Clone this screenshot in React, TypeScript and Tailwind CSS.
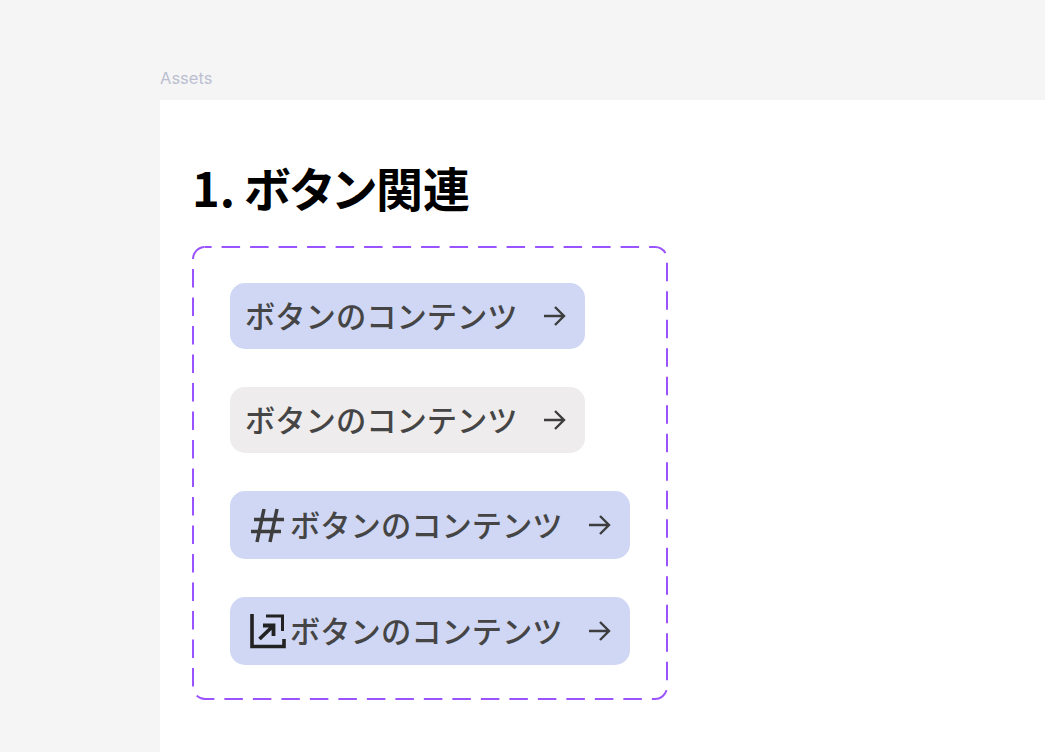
const jp = "font-['Noto_Sans_CJK_JP','Noto_Sans',sans-serif]";

function Arrow() {
  return (
    <svg width="30" height="30" viewBox="0 0 30 30" fill="none" stroke="#3d3d3d" strokeWidth="2.4" className="shrink-0">
      <path d="M5 15H25M16 6L25 15L16 24" />
    </svg>
  );
}

function Hash() {
  return (
    <svg width="38" height="38" viewBox="0 0 38 38" fill="none" stroke="#3d3d3d" strokeWidth="3.5" className="shrink-0">
      <path d="M16 3L9 36M29 3L22 36M6 13.5H36M3 25.5H33" />
    </svg>
  );
}

function ShareBox() {
  return (
    <svg width="38" height="38" viewBox="0 0 38 38" fill="none" stroke="#222222" className="shrink-0">
      <path d="M4 2V34.5H36V27" strokeWidth="3.6" />
      <path d="M18 4H34.5V19" strokeWidth="3" />
      <path d="M11.5 27L24 15M15 13.5H25.5V24" strokeWidth="3.8" />
    </svg>
  );
}

function ButtonRow({ bg, icon, tall }: { bg: string; icon?: React.ReactNode; tall?: boolean }) {
  return (
    <div
      className={`flex items-center rounded-[15px] ${bg} ${
        tall ? "h-[68px] w-[400px] pl-[18px]" : "h-[66px] w-[355px] pl-[15px]"
      }`}
    >
      {icon}
      <span
        className={`${jp} pb-[2px] text-[30.3px] font-medium leading-none text-[#454545] whitespace-nowrap ${
          tall ? "ml-[4px] mr-[21px]" : "mr-[21px]"
        }`}
      >
        ボタンのコンテンツ
      </span>
      <Arrow />
    </div>
  );
}

export default function App() {
  return (
    <div className="flex h-[752px] w-[1045px] flex-col overflow-hidden bg-[#f5f5f5] pl-40">
      <div className="flex h-[100px] items-end pb-[12px] font-['Inter',sans-serif] text-[16.5px] leading-[20px] text-[#bcbfd2]">
        Assets
      </div>
      <div className="flex-1 bg-white pl-8 pt-[57px]">
        <h1 className={`${jp} mb-[30px] text-[47px] font-bold leading-[59px] text-black [word-spacing:-2px] [font-feature-settings:'palt']`}>
          1. ボタン関連
        </h1>
        <div className="relative flex h-[454px] w-[476px] flex-col items-start pl-[38px] pt-[37px]">
          <svg className="absolute inset-0" width="476" height="454" fill="none">
            <rect
              x="1"
              y="1"
              width="474"
              height="452"
              rx="12"
              stroke="#9b52ff"
              strokeWidth="2"
              strokeDasharray="18.5 10"
              strokeDashoffset="11.9"
            />
          </svg>
          <div className="mb-[38px]">
            <ButtonRow bg="bg-[#cfd7f4]" />
          </div>
          <div className="mb-[38px]">
            <ButtonRow bg="bg-[#eeecec]" />
          </div>
          <div className="mb-[38px]">
            <ButtonRow bg="bg-[#cfd7f4]" tall icon={<Hash />} />
          </div>
          <ButtonRow bg="bg-[#cfd7f4]" tall icon={<ShareBox />} />
        </div>
      </div>
    </div>
  );
}
